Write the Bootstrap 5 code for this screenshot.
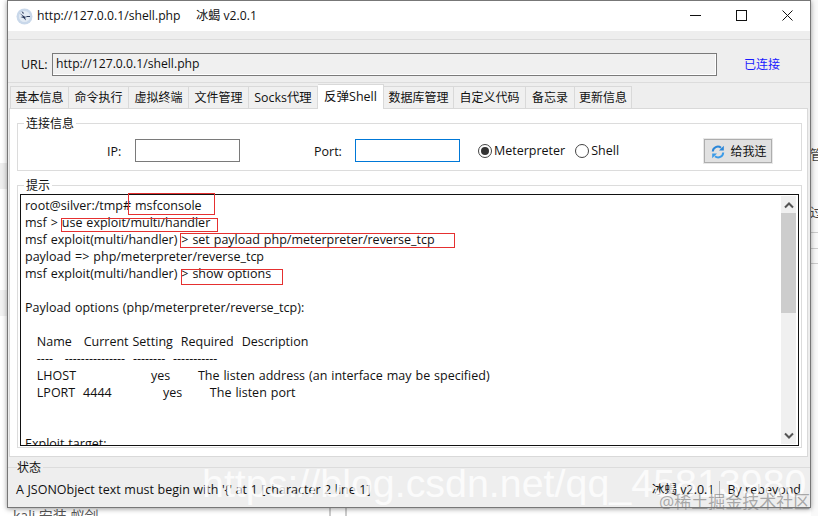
<!doctype html>
<html lang="zh">
<head>
<meta charset="utf-8">
<title>冰蝎</title>
<link href="https://cdn.jsdelivr.net/npm/bootstrap@5.3.0/dist/css/bootstrap.min.css" rel="stylesheet">
<style>
html,body{height:516px;overflow:hidden}
body{background:#fff;font-family:"Open Sans","Noto Sans CJK SC",sans-serif;font-size:12.5px;color:#111;position:relative}
.desk-strip{position:absolute;left:0;top:163px;width:8px;height:26px;background:#eee}
.desk-strip2{position:absolute;left:0;top:290px;width:8px;height:26px;background:#f2f2f2}
.desk-right{position:absolute;left:811px;top:0;width:7px;height:516px;background:#f9f9f9;overflow:hidden}
.desk-frag{position:absolute;left:-1px;font-size:13px;line-height:16px;color:#444}
.desk-rule{position:absolute;left:0;width:7px;height:1px;background:#ccc}
.desk-foot{position:absolute;left:13px;top:507px;font-size:14px;color:#555;line-height:18px;white-space:nowrap}
.desk-v{position:absolute;top:508px;height:8px;width:2px;background:#ccc}
.app-win{position:absolute;left:7px;top:0;width:804px;height:508px;background:#eee;border:1px solid #777;box-shadow:0 1px 5px rgba(0,0,0,.4);display:flex;flex-direction:column}
.title-bar{height:30px;background:#fff;padding-left:8px;font-size:12.2px;flex:none}
.logo-ic{width:17px;height:17px;flex:none}
.title-txt{margin-left:4px;white-space:pre}
.title-cn{font-size:12px}
.win-btn{width:46px;height:29px;margin-bottom:2px;display:flex;align-items:center;justify-content:center}
.url-wrap{margin-top:8px;height:44px;border-top:1px solid #dcdcdc;border-bottom:1px solid #dcdcdc;flex:none;padding:13px 0 0 13px}
.url-lbl{width:31px;line-height:23px}
.url-box{width:665px;height:23px;border:1px solid #7a7a7a;background:#f0f0f0;padding-left:3px;line-height:20px;font-size:12.2px;box-shadow:inset -1px -1px 0 #fff}
.state-lnk{color:#1a1aff;margin-left:27px;line-height:23px;font-size:12px}
.tab-line{flex:none;height:25px;padding-left:2px;align-items:flex-end;position:relative;z-index:1}
.tab-it{height:22px;border:1px solid #d9d9d9;border-bottom:0;border-left-width:0;background:#f0f0f0;line-height:21px;white-space:nowrap;text-align:center;font-size:12px}
.tab-it.first{border-left-width:1px}
.tab-it.socks{font-size:12.4px}
.tab-it.on{height:25px;margin-bottom:-1px;background:#fff;line-height:23px;font-size:12.5px}
.tw49{width:49px}.tw57{width:57px}.tw59{width:59px}.tw60{width:60px}.tw66{width:66px}.tw69{width:69px}.tw70{width:70px}.tw72{width:72px}
.pane-box{flex:none;height:349px;margin-left:1px;width:799px;background:#fff;border:1px solid #d9d9d9;padding:14px 5px 0 7px}
.grp{border:1px solid #dcdcdc;position:relative}
.grp-t{position:absolute;left:6px;top:-9px;background:#fff;padding:0 2px;line-height:18px;font-size:12px}
.conn{height:48px;margin-bottom:14px;padding-top:7px}
.ip-lbl{margin-left:89px;width:28px;padding-top:3px}
.port-lbl{margin-left:74px;width:41px;padding-top:3px}
.ip-in{width:105px;height:23px;border:1px solid #7a7a7a;background:#fff}
.ip-in.act{border-color:#0078d7}
.radio-dot{width:14px;height:14px;border-radius:50%;border:1px solid #444;background:#fff;display:inline-flex;align-items:center;justify-content:center;flex:none;margin-right:2px}
.radio-dot i{display:block;width:8px;height:8px;border-radius:50%;background:#333}
.radio-txt{padding-top:2px}
.radio-a{margin-left:18px}
.radio-b{margin-left:10px}
.go-btn{width:68px;height:24px;margin-right:29px;padding:2px 0 0 2px;background:#e1e1e1;border:1px solid #adadad;outline:1px solid #e8e8e8;display:flex;align-items:center;justify-content:center;gap:5px;line-height:1;font-size:12px}
.tip-grp{height:263px}
.term{position:absolute;left:2px;top:8px;right:2px;bottom:1px;border:1px solid #111;background:#fff;overflow:hidden}
.term-txt{margin:0;padding:2px 0 0 4px;font-family:"Open Sans","Noto Sans CJK SC",sans-serif;font-size:12.5px;line-height:17px;color:#111;white-space:pre;word-spacing:.7px;overflow:hidden}
.sb{position:absolute;right:2px;top:1px;bottom:1px;width:15px;background:#f0f0f0}
.sb-thumb{position:absolute;left:0;top:17px;width:15px;height:100px;background:#cdcdcd}
.sb-up{position:absolute;left:3px;top:6px}
.sb-dn{position:absolute;left:3px;bottom:5px}
.rmark{position:absolute;border:1px solid #e53030;pointer-events:none}
.rm1{left:110px;top:7px;width:87px;height:22px}
.rm2{left:43px;top:32px;width:157px;height:14px}
.rm3{left:162px;top:47px;width:275px;height:15px}
.rm4{left:163px;top:83px;width:102px;height:16px}
.status{flex:1;position:relative;border-top:1px solid #dcdcdc;margin-top:10px;padding:13px 0 0 8px;white-space:nowrap;line-height:17px;word-spacing:.3px}
.status-t{position:absolute;left:9px;top:-8px;background:#eee;line-height:16px;padding-right:2px;font-size:12px}
.status-r{position:absolute;right:9px;top:13px;display:flex;line-height:17px;word-spacing:0}
.status-r span+span{border-left:1px solid #bbb;margin-left:4px;padding-left:8px}
.wm{position:absolute;left:202px;top:464px;font-family:"Liberation Sans",sans-serif;font-size:39.400px;color:rgba(255,255,255,.8);white-space:nowrap;line-height:1}
.wm2{position:absolute;left:659px;top:493px;font-size:17px;color:rgba(120,120,120,.6);white-space:nowrap;line-height:1}
</style>
</head>
<body>
<div class="desk-strip"></div><div class="desk-strip2"></div>
<div class="desk-right">
  <span class="desk-frag" style="top:146px">管</span>
  <span class="desk-frag" style="top:204px">过</span>
  <i class="desk-rule" style="top:232px"></i><i class="desk-rule" style="top:248px"></i><i class="desk-rule" style="top:263px"></i>
</div>
<div class="desk-foot">kali 安装 蚁剑</div>
<i class="desk-v" style="left:329px"></i><i class="desk-v" style="left:345px"></i>
<div class="app-win">
  <div class="title-bar d-flex align-items-center">
    <svg class="logo-ic" viewBox="0 0 17 17"><circle cx="8.500" cy="8.500" r="8" fill="#c9d8ea"/><circle cx="8.500" cy="8.500" r="5.500" fill="#e3ebf4"/><path d="M3.500 5l3.500 2.500 1.500 1 2.500.5-2 .5 1 3-2.500-2.500-3-1 2.500-.5zM10 8l4 0v1l-3 0zM5.500 3l2.500 2-1 1z" fill="#27375a"/></svg>
    <span class="title-txt">http://127.0.0.1/shell.php     <span class="title-cn">冰蝎</span> v2.0.1</span>
    <div class="ms-auto d-flex">
      <div class="win-btn"><svg width="11" height="11" viewBox="0 0 11 11"><path d="M0 5.500h11" stroke="#111"/></svg></div>
      <div class="win-btn"><svg width="11" height="11" viewBox="0 0 11 11"><rect x=".5" y=".5" width="10" height="10" fill="none" stroke="#111"/></svg></div>
      <div class="win-btn"><svg width="11" height="11" viewBox="0 0 11 11"><path d="M.5.5l10 10M10.500.5l-10 10" stroke="#111"/></svg></div>
    </div>
  </div>
  <div class="url-wrap d-flex align-items-start">
    <span class="url-lbl">URL:</span>
    <div class="url-box">http://127.0.0.1/shell.php</div>
    <span class="state-lnk">已连接</span>
  </div>
  <div class="tab-line d-flex">
    <div class="tab-it first tw59">基本信息</div><div class="tab-it tw60">命令执行</div><div class="tab-it tw60">虚拟终端</div><div class="tab-it tw60">文件管理</div><div class="tab-it socks tw69">Socks代理</div><div class="tab-it on tw66">反弹Shell</div><div class="tab-it tw70">数据库管理</div><div class="tab-it tw72">自定义代码</div><div class="tab-it tw49">备忘录</div><div class="tab-it tw57">更新信息</div>
  </div>
  <div class="pane-box">
    <div class="grp conn d-flex align-items-center">
      <span class="grp-t">连接信息</span>
      <span class="ip-lbl">IP:</span>
      <span class="ip-in"></span>
      <span class="port-lbl">Port:</span>
      <span class="ip-in act"></span>
      <span class="d-flex align-items-center radio-a"><span class="radio-dot"><i></i></span><span class="radio-txt">Meterpreter</span></span>
      <span class="d-flex align-items-center radio-b"><span class="radio-dot"></span><span class="radio-txt">Shell</span></span>
      <span class="go-btn ms-auto">
        <svg width="14" height="14" viewBox="0 0 14 14" fill="none"><path d="M1.800 6.500A5 5 0 0 1 10 2.800" stroke="#2a86d8" stroke-width="2"/><path d="M12.800 .8v4.700H8z" fill="#2a86d8"/><path d="M12.200 7.500A5 5 0 0 1 4 11.200" stroke="#3b9be8" stroke-width="2"/><path d="M1.200 13.200V8.500H6z" fill="#3b9be8"/></svg>
        给我连
      </span>
    </div>
    <div class="grp tip-grp">
      <span class="grp-t">提示</span>
      <div class="term">
<pre class="term-txt">root@silver:/tmp# msfconsole
msf &gt; use exploit/multi/handler
msf exploit(multi/handler) &gt; set payload php/meterpreter/reverse_tcp
payload =&gt; php/meterpreter/reverse_tcp
msf exploit(multi/handler) &gt; show options

Payload options (php/meterpreter/reverse_tcp):

   Name   Current Setting  Required  Description
   ----   ---------------  --------  -----------
   LHOST                   yes       The listen address (an interface may be specified)
   LPORT  4444             yes       The listen port


Exploit target:</pre>
        <div class="sb">
          <div class="sb-thumb"></div>
          <svg class="sb-up" width="10" height="7" viewBox="0 0 10 7"><path d="M1 5.500l4-4 4 4" fill="none" stroke="#555" stroke-width="2"/></svg>
          <svg class="sb-dn" width="10" height="7" viewBox="0 0 10 7"><path d="M1 1.500l4 4 4-4" fill="none" stroke="#555" stroke-width="2"/></svg>
        </div>
      </div>
      <span class="rmark rm1"></span>
      <span class="rmark rm2"></span>
      <span class="rmark rm3"></span>
      <span class="rmark rm4"></span>
    </div>
  </div>
  <div class="status">
    <span class="status-t">状态</span>
    A JSONObject text must begin with '{' at 1 [character 2 line 1]
    <div class="status-r"><span>冰蝎 v2.0.1</span><span>By rebeyond</span></div>
  </div>
</div>
<div class="wm">https://blog.csdn.net/qq_45813980</div>
<div class="wm2">@稀土掘金技术社区</div>
</body>
</html>
